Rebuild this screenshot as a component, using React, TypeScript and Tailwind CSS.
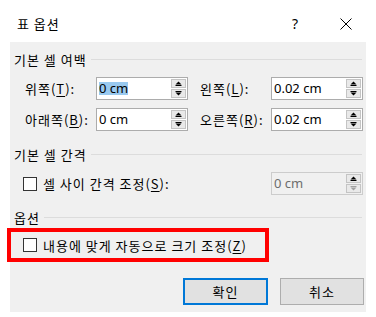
import { ReactNode } from "react";

const ko = { fontFamily: '"Noto Sans CJK KR", "Noto Sans", sans-serif' };
const latin = { fontFamily: '"Noto Sans", "Liberation Sans", sans-serif' };

function Mn({ children }: { children: ReactNode }) {
  return <u className="underline underline-offset-2">{children}</u>;
}

function Spinner({ disabled }: { disabled?: boolean }) {
  const arrow = disabled ? "#a0a0a0" : "#000";
  return (
    <div className="flex w-[16px] flex-col gap-[1px] self-stretch py-[1px] pr-[1px]">
      <div className="flex flex-1 items-center justify-center border border-[#c4c4c4] bg-[#e9e9e9]">
        <svg width="7" height="5" viewBox="0 0 7 5">
          <path d="M3.5 0.5 L6.5 3.5 L0.5 3.5 Z" fill="#000" />
          <rect x="0.5" y="4" width="6" height="1" fill="#000" />
        </svg>
      </div>
      <div className="flex flex-1 items-center justify-center border border-[#c4c4c4] bg-[#e9e9e9]">
        <svg width="7" height="5" viewBox="0 0 7 5">
          <rect x="0.5" y="0" width="6" height="1" fill={arrow} />
          <path d="M0.5 1.5 L6.5 1.5 L3.5 4.5 Z" fill={arrow} />
        </svg>
      </div>
    </div>
  );
}

function NumBox({
  value,
  selected,
  disabled,
}: {
  value: string;
  selected?: boolean;
  disabled?: boolean;
}) {
  return (
    <div
      className={
        "flex h-[23px] w-[92px] items-center border tracking-normal " +
        (disabled ? "border-[#cccccc] bg-[#f0f0f0]" : "border-[#acacac] bg-white")
      }
    >
      <div className="flex flex-1 items-center pl-[2px] text-[13px]" style={latin}>
        <span
          className={
            (selected ? "bg-[#99c9ef] text-black " : "") +
            (disabled ? "text-[#6d6d6d]" : "text-black")
          }
        >
          {value}
        </span>
      </div>
      <Spinner disabled={disabled} />
    </div>
  );
}

function GroupHeader({ title, className }: { title: string; className: string }) {
  return (
    <div className={"flex items-center pl-[4px] pr-[4px] " + className}>
      <span className="text-[13px] text-black">{title}</span>
      <div className="ml-[4px] h-[1px] flex-1 bg-[#dcdcdc]" />
    </div>
  );
}

function CheckBox() {
  return <span className="h-[14px] w-[14px] shrink-0 border border-[#333] bg-white" />;
}

export default function App() {
  return (
    <div className="h-[317px] w-[376px] bg-white leading-none tracking-[1px]" style={ko}>
      {/* 제목 표시줄 */}
      <div className="flex h-[42px] items-start pt-[17px] pl-[17px] text-[13px] text-black">
        <span>표 옵션</span>
        <span className="ml-auto w-[12px] text-[14px]" style={latin}>?</span>
        <svg className="ml-[36px] mt-[1px]" width="12" height="12" viewBox="0 0 12 12">
          <path d="M0.5 0.5 L11.5 11.5 M11.5 0.5 L0.5 11.5" stroke="#000" strokeWidth="1" />
        </svg>
        <span className="w-[24px]" />
      </div>

      {/* 본문 */}
      <div className="relative mx-[10px] flex h-[270px] flex-col bg-[#f0f0f0]">
        <GroupHeader title="기본 셀 여백" className="h-[35px]" />

        <div className="flex h-[23px] items-center pl-[15px] text-[13px]">
          <span className="w-[71px]">위쪽(<Mn>T</Mn>):</span>
          <NumBox value="0 cm" selected />
          <span className="ml-[12px] w-[71px]">왼쪽(<Mn>L</Mn>):</span>
          <NumBox value="0.02 cm" />
        </div>

        <div className="mt-[8px] flex h-[23px] items-center pl-[15px] text-[13px]">
          <span className="w-[71px]">아래쪽(<Mn>B</Mn>):</span>
          <NumBox value="0 cm" />
          <span className="ml-[12px] w-[71px]">오른쪽(<Mn>R</Mn>):</span>
          <NumBox value="0.02 cm" />
        </div>

        <GroupHeader title="기본 셀 간격" className="mt-[8px] h-[30px]" />

        <div className="mt-[3px] flex h-[23px] items-center pl-[13px] pr-[3px] text-[13px]">
          <CheckBox />
          <span className="ml-[6px]">셀 사이 간격 조정(<Mn>S</Mn>):</span>
          <div className="ml-auto">
            <NumBox value="0 cm" disabled />
          </div>
        </div>

        <GroupHeader title="옵션" className="mt-[7px] h-[30px]" />

        <div className="flex h-[26px] items-center pl-[13px] text-[13px]">
          <CheckBox />
          <span className="ml-[6px]">내용에 맞게 자동으로 크기 조정(<Mn>Z</Mn>)</span>
        </div>

        {/* 강조 표시 */}
        <div className="absolute left-[-3px] top-[186px] h-[34px] w-[262px] border-4 border-[#ff0000]" />

        <div className="mt-[20px] flex justify-end gap-[12px] pr-[2px] text-[13px]">
          <button className="flex h-[27px] w-[85px] items-center justify-center border-2 border-[#0078d7] bg-[#e1e1e1]">
            확인
          </button>
          <button className="flex h-[27px] w-[84px] items-center justify-center border border-[#adadad] bg-[#e1e1e1]">
            취소
          </button>
        </div>
      </div>
    </div>
  );
}
